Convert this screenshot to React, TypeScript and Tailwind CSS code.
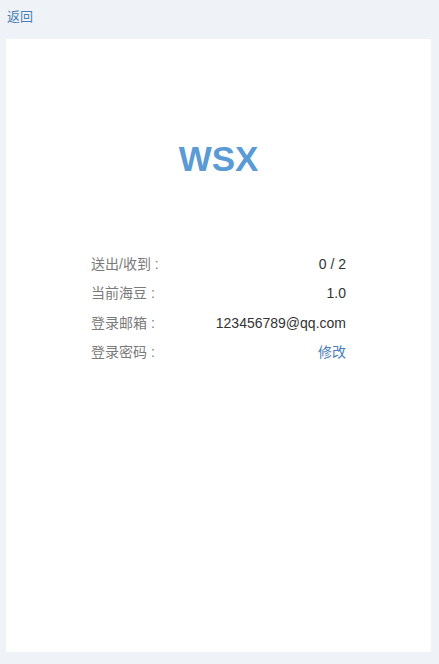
import React from 'react';

const rows: { label: string; value: string; link?: boolean }[] = [
  { label: '送出/收到 :', value: '0 / 2' },
  { label: '当前海豆 :', value: '1.0' },
  { label: '登录邮箱 :', value: '123456789@qq.com' },
  { label: '登录密码 :', value: '修改', link: true },
];

const App: React.FC = () => {
  return (
    <div className="min-h-[664px] bg-[#eff3f8] flex flex-col font-['Liberation_Sans','Noto_Sans_CJK_SC',sans-serif]">
      <div className="h-[39px] px-[7px] pt-[4px]">
        <a className="text-[13px] leading-[20px] text-[#4a7fb8] cursor-pointer">返回</a>
      </div>
      <div className="ml-[6px] mr-[8px] h-[613px] bg-white flex flex-col items-center">
        <h1 className="mt-[100px] text-[35px] leading-[40px] font-bold text-[#5b9bd5]">WSX</h1>
        <div className="w-3/5 mt-[71px] flex flex-col">
          {rows.map(r => (
            <div key={r.label} className="flex justify-between items-center h-[29.3px] text-[14px]">
              <span className="text-[#7a7a7a]">{r.label}</span>
              <span className={r.link ? 'text-[#4a7fb8] cursor-pointer' : 'text-[#333]'}>{r.value}</span>
            </div>
          ))}
        </div>
      </div>
    </div>
  );
};

export default App;
